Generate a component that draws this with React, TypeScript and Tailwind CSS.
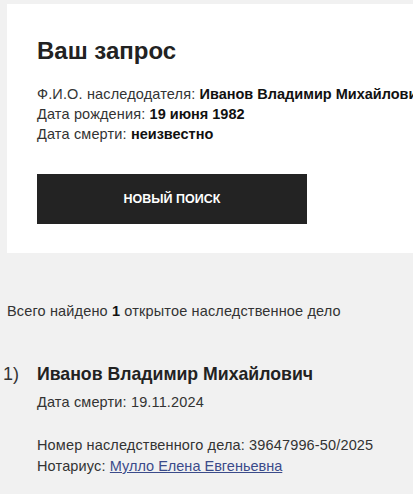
export default function App() {
  return (
    <div
      className="min-h-[494px] bg-[#f1f1f1] pt-1 text-[#222]"
      style={{ fontFamily: '"Liberation Sans", Arial, sans-serif' }}
    >
      <div className="ml-[7px] bg-white pb-[29px] pl-[30px] pt-[32px]">
        <h1 className="text-[24px] leading-[30px] font-semibold text-[#222]">Ваш запрос</h1>
        <div className="mt-[18px] whitespace-nowrap text-[14.5px] leading-[20px] tracking-[0.15px] text-[#333]">
          <p>
            Ф.И.О. наследодателя:{' '}
            <b className="tracking-normal text-[#111]">Иванов Владимир Михайлович</b>
          </p>
          <p>
            Дата рождения: <b className="tracking-normal text-[#111]">19 июня 1982</b>
          </p>
          <p>
            Дата смерти: <b className="tracking-normal text-[#111]">неизвестно</b>
          </p>
        </div>
        <button
          type="button"
          className="mt-[30px] flex h-[50px] w-[270px] items-center justify-center bg-[#232323] text-[12.5px] font-bold text-white"
        >
          НОВЫЙ ПОИСК
        </button>
      </div>

      <p className="mt-[48px] pl-[7px] text-[14.5px] leading-[20px] tracking-[0.15px] text-[#333]">
        Всего найдено <b className="text-[#111]">1</b> открытое наследственное дело
      </p>

      <div className="mt-[40px] flex">
        <div className="w-[37px] pl-[3px] text-[18px] leading-[26px] text-[#333]">1)</div>
        <div className="text-[14.5px] leading-[21px] tracking-[0.15px] text-[#333]">
          <h2 className="text-[17.7px] leading-[26px] font-bold tracking-normal text-[#222]">
            Иванов Владимир Михайлович
          </h2>
          <p className="mt-[5px]">Дата смерти: 19.11.2024</p>
          <p className="mt-[22px]">Номер наследственного дела: 39647996-50/2025</p>
          <p>
            Нотариус:{' '}
            <a href="#" className="tracking-normal text-[#3b4b8a] underline">
              Мулло Елена Евгеньевна
            </a>
          </p>
        </div>
      </div>
    </div>
  )
}
